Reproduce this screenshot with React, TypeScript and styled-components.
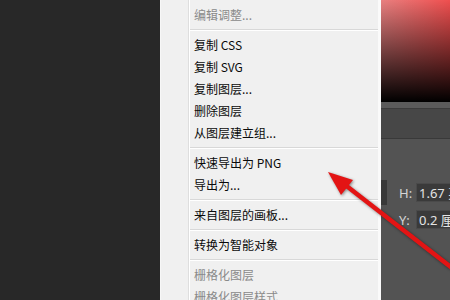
import React from 'react';
import styled, { createGlobalStyle } from 'styled-components';

const Global = createGlobalStyle`
    html, body {
        margin: 0;
        padding: 0;
        background: #282828;
        overflow: hidden;
    }
`;

const Page = styled.div`
    position: relative;
    display: flex;
    width: 450px;
    height: 300px;
    overflow: hidden;
    background: #282828;
    font-family: "Noto Sans CJK SC", "Noto Sans", sans-serif;
`;

const Backdrop = styled.div`
    width: 160px;
    flex-shrink: 0;
    background: #282828;
`;

const Menu = styled.div`
    display: flex;
    width: 221px;
    flex-shrink: 0;
    background: #f0f0f0;
    border-left: 1px solid #f7f7f7;
    border-right: 3px solid #fafafa;
    box-sizing: border-box;
`;

const Gutter = styled.div`
    width: 27px;
    flex-shrink: 0;
    border-right: 1px solid #dedede;
    box-shadow: 1px 0 0 #ffffff;
`;

const List = styled.div`
    flex: 1;
    display: flex;
    flex-direction: column;
    padding-top: 3px;
    margin-left: 1px;
`;

const Item = styled.div<{ $disabled?: boolean }>`
    height: 22px;
    flex-shrink: 0;
    display: flex;
    align-items: center;
    padding-left: 4px;
    font-size: 12px;
    color: ${p => (p.$disabled ? '#8a8a8a' : '#0a0a0a')};
    white-space: nowrap;
`;

const Separator = styled.div`
    height: 8px;
    flex-shrink: 0;
    display: flex;
    align-items: center;

    &::after {
        content: '';
        display: block;
        width: 100%;
        height: 1px;
        background: #d8d8d8;
        box-shadow: 0 1px 0 #ffffff;
    }
`;

const Side = styled.div`
    flex: 1;
    display: flex;
    flex-direction: column;
    background: #535353;
`;

const ColorField = styled.div`
    height: 102px;
    flex-shrink: 0;
    background:
        linear-gradient(to bottom, rgba(0, 0, 0, 0) 0%, #000 100%),
        linear-gradient(to right, #e88080 0%, #f23c3c 100%);
`;

const Strip = styled.div`
    height: 6px;
    flex-shrink: 0;
    background: #5b5b5b;
    border-bottom: 1px solid #3c3c3c;
`;

const Band = styled.div`
    height: 29px;
    flex-shrink: 0;
    background: #474747;
    border-bottom: 1px solid #393939;
`;

const Lower = styled.div`
    flex: 1;
    display: flex;
    align-items: flex-start;
    padding-top: 41px;
`;

const Stub = styled.div`
    width: 6px;
    height: 25px;
    background: #393939;
    flex-shrink: 0;
`;

const Fields = styled.div`
    display: flex;
    flex-direction: column;
    gap: 8px;
    margin-left: 12px;
    padding-top: 3px;
`;

const Row = styled.div`
    display: flex;
    align-items: center;
    height: 19px;
`;

const Label = styled.span`
    width: 17px;
    font-family: "Noto Sans", sans-serif;
    font-size: 13px;
    color: #d6d6d6;
`;

const Input = styled.div`
    width: 60px;
    height: 19px;
    display: flex;
    align-items: center;
    padding-left: 2px;
    background: #3a3a3a;
    border: 1px solid #4a4a4a;
    box-sizing: border-box;
    font-family: "Noto Sans", "Noto Sans CJK SC", sans-serif;
    font-size: 13px;
    color: #e4e4e4;
    white-space: nowrap;
    overflow: hidden;
`;

const Arrow = styled.svg`
    position: absolute;
    left: 0;
    top: 0;
    pointer-events: none;
    filter: drop-shadow(1px 1px 1.5px rgba(0, 0, 0, 0.45));
`;

type Entry = { label?: string; disabled?: boolean; sep?: boolean };

const entries: Entry[] = [
    { label: '编辑调整...', disabled: true },
    { sep: true },
    { label: '复制 CSS' },
    { label: '复制 SVG' },
    { label: '复制图层...' },
    { label: '删除图层' },
    { label: '从图层建立组...' },
    { sep: true },
    { label: '快速导出为 PNG' },
    { label: '导出为...' },
    { sep: true },
    { label: '来自图层的画板...' },
    { sep: true },
    { label: '转换为智能对象' },
    { sep: true },
    { label: '栅格化图层', disabled: true },
    { label: '栅格化图层样式', disabled: true },
];

const App: React.FC = () => {
    return (
        <>
            <Global />
            <Page>
                <Backdrop />
                <Menu>
                    <Gutter />
                    <List>
                        {entries.map((e, i) =>
                            e.sep ? (
                                <Separator key={i} />
                            ) : (
                                <Item key={i} $disabled={e.disabled}>
                                    {e.label}
                                </Item>
                            )
                        )}
                    </List>
                </Menu>
                <Side>
                    <ColorField />
                    <Strip />
                    <Band />
                    <Lower>
                        <Stub />
                        <Fields>
                            <Row>
                                <Label>H:</Label>
                                <Input>1.67 英寸</Input>
                            </Row>
                            <Row>
                                <Label>Y:</Label>
                                <Input>0.2 厘米</Input>
                            </Row>
                        </Fields>
                    </Lower>
                </Side>
                <Arrow width="450" height="300" viewBox="0 0 450 300">
                    <line x1="344" y1="184" x2="470" y2="282" stroke="#e31414" strokeWidth="4.5" strokeLinecap="round" />
                    <polygon points="328,172 353,180 341,195" fill="#e31414" />
                </Arrow>
            </Page>
        </>
    );
};

export default App;
